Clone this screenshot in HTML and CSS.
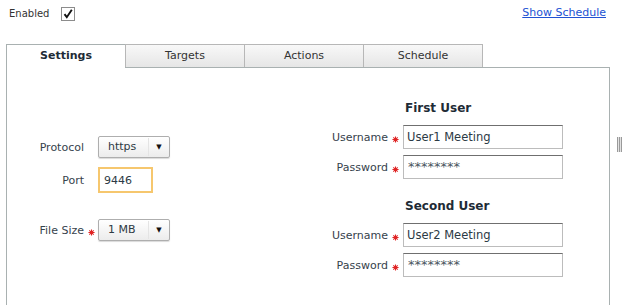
FILE: index.html
```html
<!DOCTYPE html>
<html lang="en">
<head>
    <meta charset="UTF-8">
    <title>Settings</title>
    <link rel="stylesheet" href="styles.css">
</head>
<body>

<div class="page">
    <div class="main">
        <div class="topbar">
            <label class="enabled">
                <span>Enabled</span>
                <span class="check">
                    <svg width="12" height="12" viewBox="0 0 12 12"><path d="M2.5 6.2 L4.8 9.2 L9.8 1.8" fill="none" stroke="#111" stroke-width="1.9"/></svg>
                </span>
            </label>
            <a href="#" class="show-schedule">Show Schedule</a>
        </div>

        <div class="tabs">
            <div class="tab active">Settings</div>
            <div class="tab">Targets</div>
            <div class="tab">Actions</div>
            <div class="tab">Schedule</div>
        </div>

        <div class="panel">
            <div class="form-grid left-col">
                <span class="lbl">Protocol</span>
                <span class="req"></span>
                <div class="select">
                    <span class="select-text">https</span>
                    <span class="select-arrow">&#9660;</span>
                </div>

                <span class="lbl">Port</span>
                <span class="req"></span>
                <input type="text" class="port-input" value="9446">

                <span class="lbl lbl-gap">File Size</span>
                <span class="req lbl-gap"><svg class="star" width="7" height="7" viewBox="0 0 8 8"><path d="M4 0.5V7.5M0.5 4H7.5M1.5 1.5L6.5 6.5M6.5 1.5L1.5 6.5" stroke="#e02323" stroke-width="1.2"/></svg></span>
                <div class="select lbl-gap">
                    <span class="select-text">1 MB</span>
                    <span class="select-arrow">&#9660;</span>
                </div>
            </div>

            <div class="form-grid right-col">
                <h3 class="user-head">First User</h3>

                <span class="lbl">Username</span>
                <span class="req"><svg class="star" width="7" height="7" viewBox="0 0 8 8"><path d="M4 0.5V7.5M0.5 4H7.5M1.5 1.5L6.5 6.5M6.5 1.5L1.5 6.5" stroke="#e02323" stroke-width="1.2"/></svg></span>
                <input type="text" class="text-input" value="User1 Meeting">

                <span class="lbl">Password</span>
                <span class="req"><svg class="star" width="7" height="7" viewBox="0 0 8 8"><path d="M4 0.5V7.5M0.5 4H7.5M1.5 1.5L6.5 6.5M6.5 1.5L1.5 6.5" stroke="#e02323" stroke-width="1.2"/></svg></span>
                <input type="text" class="text-input masked" value="********">

                <h3 class="user-head second">Second User</h3>

                <span class="lbl">Username</span>
                <span class="req"><svg class="star" width="7" height="7" viewBox="0 0 8 8"><path d="M4 0.5V7.5M0.5 4H7.5M1.5 1.5L6.5 6.5M6.5 1.5L1.5 6.5" stroke="#e02323" stroke-width="1.2"/></svg></span>
                <input type="text" class="text-input" value="User2 Meeting">

                <span class="lbl">Password</span>
                <span class="req"><svg class="star" width="7" height="7" viewBox="0 0 8 8"><path d="M4 0.5V7.5M0.5 4H7.5M1.5 1.5L6.5 6.5M6.5 1.5L1.5 6.5" stroke="#e02323" stroke-width="1.2"/></svg></span>
                <input type="text" class="text-input masked" value="********">
            </div>
        </div>
    </div>

    <div class="splitter">
        <span class="grip"></span>
    </div>
</div>

</body>
</html>
```

FILE: styles.css
```css
body {
    font-family: "DejaVu Sans", Verdana, sans-serif;
    font-size: 11px;
    color: #2e3a44;
    background-color: #ffffff;
    margin: 0;
    padding: 0;
    overflow: hidden;
}
.page {
    display: flex;
    height: 305px;
}
.main {
    width: 610px;
    flex-shrink: 0;
}
.topbar {
    display: flex;
    justify-content: space-between;
    align-items: flex-start;
    box-sizing: border-box;
    height: 44px;
    padding: 7px 4px 0 9px;
}
.enabled {
    display: flex;
    align-items: flex-start;
    gap: 12px;
    font-size: 10px;
    line-height: 14px;
    color: #333;
}
.check {
    box-sizing: border-box;
    width: 14px;
    height: 14px;
    border: 1px solid #8c8c8c;
    background-color: #fff;
    display: flex;
    align-items: center;
    justify-content: center;
}
.show-schedule {
    color: #2152d3;
    line-height: 14px;
    margin-top: -1px;
}

/* tabs */
.tabs {
    display: flex;
    margin-left: 6px;
    height: 23px;
}
.tab {
    box-sizing: border-box;
    width: 119px;
    height: 23px;
    border-top: 1px solid #b7b7b7;
    border-left: 1px solid #b7b7b7;
    background: linear-gradient(#f8f8f8, #e6e6e6);
    text-align: center;
    line-height: 21px;
    color: #333;
}
.tab:last-child {
    width: 120px;
    border-right: 1px solid #b7b7b7;
}
.tab.active {
    position: relative;
    height: 24px;
    background: #ffffff;
    border-left-color: #a9b1b1;
    border-top-color: #a9b1b1;
    font-weight: bold;
    color: #1e2b36;
    z-index: 1;
}

/* panel */
.panel {
    display: flex;
    margin-left: 6px;
    border: 1px solid #a9b1b1;
    border-bottom: none;
    height: 237px;
}
.form-grid {
    display: grid;
    align-items: center;
    align-content: start;
}
.left-col {
    width: 280px;
    grid-template-columns: 77px 14px auto;
    padding-top: 68px;
    row-gap: 9px;
}
.right-col {
    grid-template-columns: 101px 15px 160px;
    padding-top: 32px;
    row-gap: 6px;
}
.lbl {
    text-align: right;
    color: #36424c;
    white-space: nowrap;
}
.lbl-gap {
    margin-top: 17px;
}
.req {
    display: flex;
    justify-content: center;
    align-items: center;
    height: 100%;
}
.star {
    margin-top: 4px;
}
.user-head {
    grid-column: 3;
    margin: 0 0 3px 0;
    padding-left: 2px;
    font-size: 12px;
    line-height: 16px;
    color: #1e2b36;
}
.user-head.second {
    margin-top: 13px;
}

/* fields */
.select {
    box-sizing: border-box;
    display: flex;
    width: 72px;
    height: 22px;
    border: 1px solid #aeaeae;
    border-radius: 2px;
    background: linear-gradient(#ffffff, #ececec);
    box-shadow: 0 1px 1px rgba(0, 0, 0, 0.15);
    align-items: center;
}
.select-text {
    flex: 1;
    padding-left: 9px;
    color: #2e3a44;
    border-right: 1px solid #e4e4e4;
    line-height: 18px;
}
.select-arrow {
    width: 20px;
    text-align: center;
    font-size: 7px;
    color: #111;
}
.text-input, .port-input {
    box-sizing: border-box;
    font-family: "DejaVu Sans", Verdana, sans-serif;
    font-size: 11.5px;
    color: #2c3a45;
    outline: none;
    margin: 0;
}
.text-input {
    width: 160px;
    height: 24px;
    padding: 0 3px;
    border: 1px solid #bcbcbc;
    border-top-color: #6f6f6f;
}
.text-input.masked {
    font-size: 13px;
    padding-left: 4px;
    padding-bottom: 2px;
    color: #4a5660;
}
.port-input {
    width: 55px;
    height: 26px;
    padding: 0 4px;
    border: 2px solid #f6c76e;
    font-size: 11px;
}

/* splitter grip */
.splitter {
    flex: 1;
}
.grip {
    display: block;
    width: 5px;
    height: 15px;
    margin: 137px 0 0 7px;
    background: repeating-linear-gradient(90deg, #9a9a9a 0, #9a9a9a 1px, #e2e2e2 1px, #e2e2e2 2px);
}
```
